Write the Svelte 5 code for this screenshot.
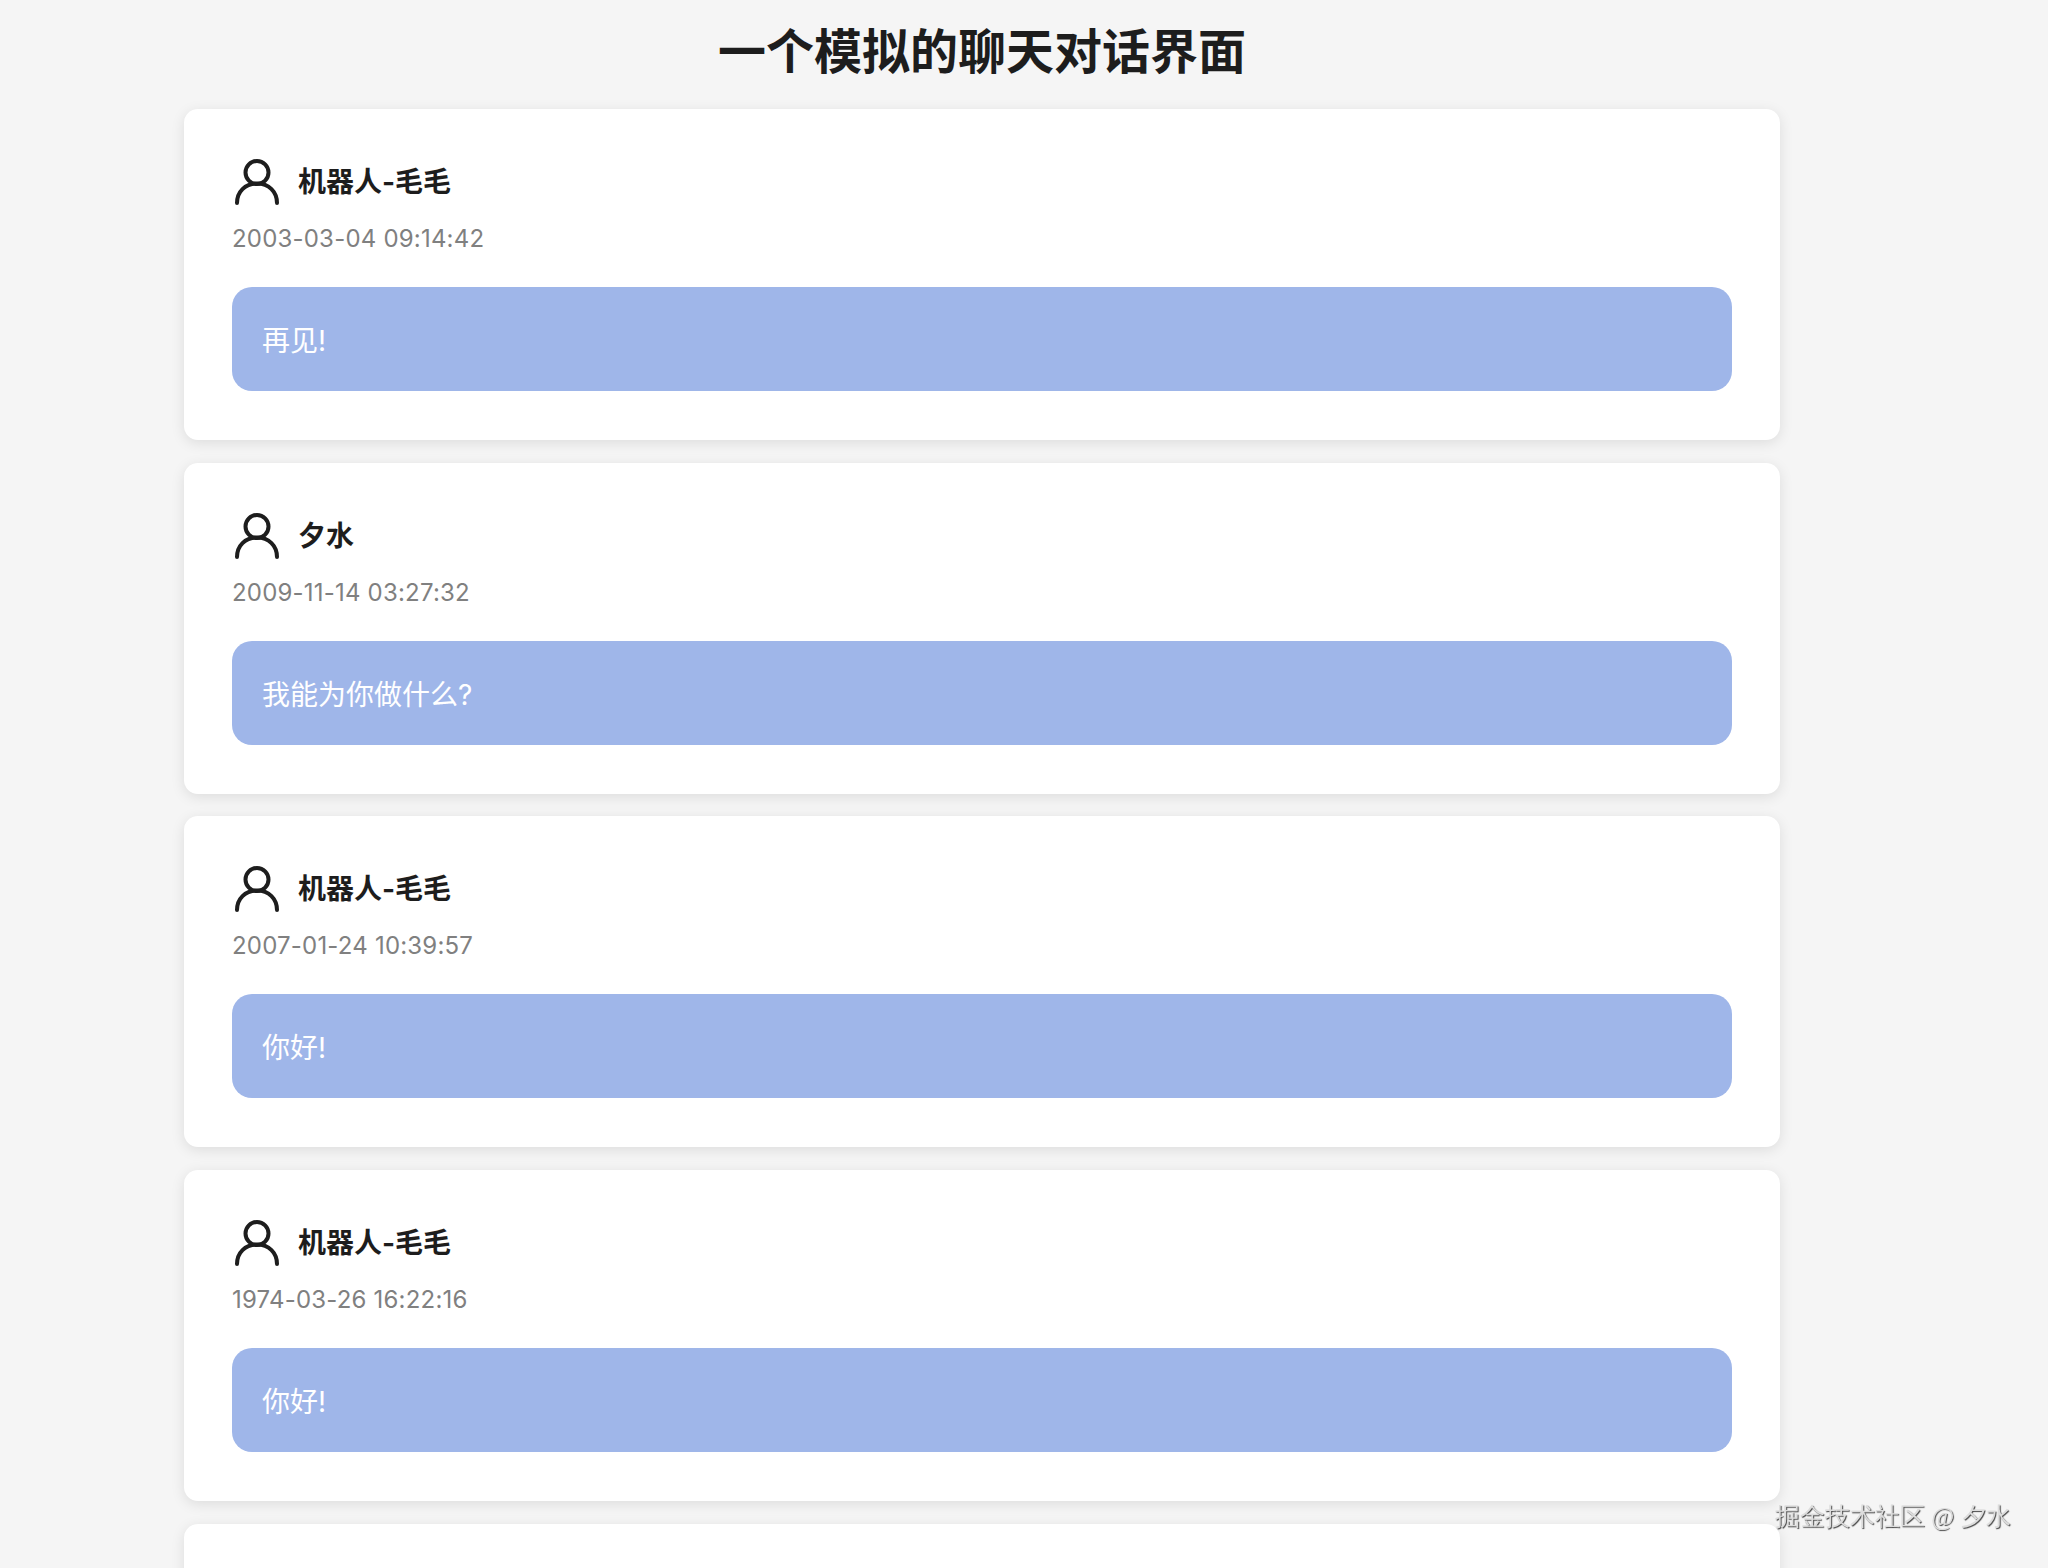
<script>
  const messages = [
    { name: '机器人-毛毛', time: '2003-03-04 09:14:42', text: '再见!' },
    { name: '夕水', time: '2009-11-14 03:27:32', text: '我能为你做什么?' },
    { name: '机器人-毛毛', time: '2007-01-24 10:39:57', text: '你好!' },
    { name: '机器人-毛毛', time: '1974-03-26 16:22:16', text: '你好!' }
  ];
</script>

<style>
  :global(body) {
    background: #f5f5f5;
    overflow: hidden;
    height: 1568px;
  }

  .page {
    width: 1596px;
    height: 1568px;
    overflow: hidden;
    padding: 0 12px;
    margin-left: 172px;
    font-family: Inter, "Noto Sans CJK SC", sans-serif;
    color: #1d1d1d;
  }

  h1 {
    margin: 0;
    height: 109px;
    padding-top: 16px;
    box-sizing: border-box;
    font-size: 48px;
    line-height: 72px;
    font-weight: 700;
    text-align: center;
  }

  .card {
    height: 331px;
    box-sizing: border-box;
    margin-bottom: 22.7px;
    padding: 48px;
    background: #fff;
    border-radius: 14px;
    box-shadow: 0 3px 14px rgba(0, 0, 0, 0.1);
  }

  .user {
    display: flex;
    align-items: center;
    gap: 18px;
    height: 48px;
    padding-left: 2px;
  }

  .name {
    font-size: 28px;
    font-weight: 700;
    line-height: 40px;
    padding-top: 2px;
  }

  .time {
    margin-top: 17px;
    font-size: 24px;
    line-height: 34px;
    letter-spacing: 0.2px;
    color: #808080;
  }

  .bubble {
    height: 104px;
    margin-top: 31px;
    padding: 0 30px;
    display: flex;
    align-items: center;
    background: #9fb6e9;
    border-radius: 20px;
    color: #fff;
    font-size: 28px;
  }

  .mark {
    position: fixed;
    left: 1775px;
    top: 1500px;
    font-size: 25px;
    line-height: 34px;
    color: #dcdcdc;
    text-shadow: 1px 1px 1px #444;
    white-space: nowrap;
  }
</style>

<div class="page">
  <h1>一个模拟的聊天对话界面</h1>
  {#each messages as m}
    <div class="card">
      <div class="user">
        <svg width="46" height="48" viewBox="0 0 46 48" fill="none" stroke="#1d1d1d" stroke-width="4" stroke-linecap="round">
          <circle cx="23" cy="15.500" r="11.500" />
          <path d="M3 46c0-11 8-19.500 20-19.500s20 8.500 20 19.500" />
        </svg>
        <span class="name">{m.name}</span>
      </div>
      <div class="time">{m.time}</div>
      <div class="bubble">{m.text}</div>
    </div>
  {/each}
  <div class="card"></div>
</div>
<div class="mark">掘金技术社区 @ 夕水</div>
